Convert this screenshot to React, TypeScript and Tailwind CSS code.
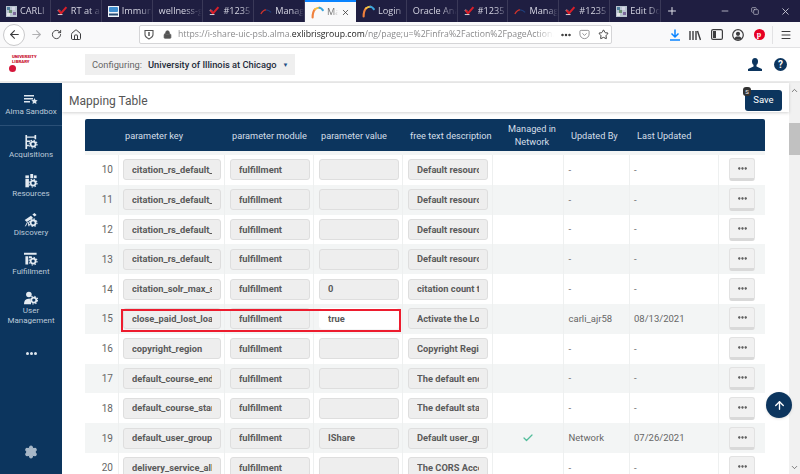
import React from "react";
import { ArrowLeft, ArrowRight, RotateCw, Home, MoreHorizontal, Star, Plus, Minus, X, Copy, ChevronUp, ChevronDown, ArrowUp, Check, Settings, Pocket, Menu, Lock } from "lucide-react";

const Rainbow = ({ s = 13 }: { s?: number }) => (
  <svg width={s} height={s} viewBox="0 0 16 16" fill="none" strokeWidth="2.6" strokeLinecap="round">
    <path d="M2 14C2 9 3 6 5 4" stroke="#f0803c" />
    <path d="M5 4C7 2.5 9 2 10.5 2.2" stroke="#f5c242" />
    <path d="M10.5 2.2C12 2.5 13.5 3.5 14.5 5" stroke="#3aa6dd" />
  </svg>
);
const Check2 = () => (
  <svg width="11" height="10" viewBox="0 0 14 12" fill="none">
    <path d="M1 5l3 1" stroke="#d9d9d9" strokeWidth="2" />
    <path d="M2 5l3 4 7-8" stroke="#d81f2a" strokeWidth="2.6" />
    <path d="M1 10.5h6" stroke="#ffffff" strokeWidth="1" />
  </svg>
);
const Mosaic = () => (
  <svg width="11" height="11" viewBox="0 0 11 11">
    <rect width="11" height="11" fill="#b9c4cf" />
    <rect x="1" y="1" width="3" height="3" fill="#4f7d9b" />
    <rect x="6" y="1" width="3" height="3" fill="#d7d7e8" />
    <rect x="3" y="4" width="3" height="3" fill="#6a8f6f" />
    <rect x="7" y="6" width="3" height="3" fill="#7c6a9c" />
    <rect x="1" y="7" width="3" height="3" fill="#e6e6e6" />
  </svg>
);
const Immune = () => (
  <svg width="11" height="11" viewBox="0 0 11 11">
    <rect width="11" height="11" fill="#eef4fa" />
    <rect x="1" y="1" width="9" height="5" rx="1" fill="#3f8fd0" />
    <rect x="1" y="7.5" width="9" height="2" fill="#284c74" />
  </svg>
);
const Arc = () => (
  <svg width="12" height="7" viewBox="0 0 14 8" fill="none" strokeWidth="1.5">
    <path d="M1 7C3 3 5 2 7 2" stroke="#d0342c" />
    <path d="M7 2C9 2 11 3 13 5" stroke="#1f3f7a" />
  </svg>
);

const tabs: { label: string; icon?: React.ReactNode; active?: boolean }[] = [
  { label: "CARLI", icon: <Mosaic /> },
  { label: "RT at a", icon: <Check2 /> },
  { label: "Immun", icon: <Immune /> },
  { label: "wellness-g" },
  { label: "#1235", icon: <Check2 /> },
  { label: "Manag", icon: <Arc /> },
  { label: "Ma", icon: <Rainbow />, active: true },
  { label: "Login", icon: <Rainbow /> },
  { label: "Oracle Ana" },
  { label: "#1235", icon: <Check2 /> },
  { label: "Manag", icon: <Arc /> },
  { label: "#1235", icon: <Check2 /> },
  { label: "Edit Do", icon: <Mosaic /> },
];

const Gear = ({ x, y }: { x: number; y: number }) => (
  <g>
    <circle cx={x} cy={y} r="3.6" fill="none" stroke="#e4ebf2" strokeWidth="2.6" />
    <circle cx={x} cy={y} r="5.6" fill="none" stroke="#e4ebf2" strokeWidth="1.6" strokeDasharray="2 2.4" />
  </g>
);

const SideIcon = ({ kind }: { kind: string }) => (
  <svg width="14" height="14" viewBox="0 0 20 20" fill="#e4ebf2">
    {kind === "acq" && (
      <>
        <path d="M2 0h2.4v20H2zM15 0h2.4v6H15zM4 2h11v1.8H4zM4 8h5v2H4zM4 14h3v2H4z" />
        <Gear x={13} y={13} />
      </>
    )}
    {kind === "res" && (
      <>
        <rect x="2" y="7" width="5" height="12" />
        <rect x="2" y="2" width="5" height="4" />
        <rect x="9" y="0" width="4" height="6" />
        <path d="M14 2h4v4h-4z" />
        <Gear x={13} y={13} />
      </>
    )}
    {kind === "dis" && (
      <>
        <path d="M1 10l9-6 3 3-9 6z" />
        <path d="M12 2l3-2 3 3-3 2z" />
        <path d="M5 13l-3 6M6 13l1 6" stroke="#e4ebf2" strokeWidth="1.4" />
        <Gear x={13} y={14} />
      </>
    )}
    {kind === "ful" && (
      <>
        <path d="M0 1h18v3H0zM2 6h4v12H2zM7 6h4v3H7z" />
        <Gear x={13} y={13} />
      </>
    )}
    {kind === "usr" && (
      <>
        <circle cx="7" cy="5" r="4" />
        <path d="M0 19c0-5 2-8 6-8s4 3 4 8z" />
        <Gear x={14} y={13} />
      </>
    )}
  </svg>
);

const navs = [
  { k: "acq", l: "Acquisitions" },
  { k: "res", l: "Resources" },
  { k: "dis", l: "Discovery" },
  { k: "ful", l: "Fulfillment" },
  { k: "usr", l: "User\nManagement" },
];

type Row = { n: number; key: string; val: string; desc: string; net?: boolean; by: string; at: string };
const rows: Row[] = [
  { n: 10, key: "citation_rs_default_a", val: "", desc: "Default resource", by: "-", at: "-" },
  { n: 11, key: "citation_rs_default_e", val: "", desc: "Default resource", by: "-", at: "-" },
  { n: 12, key: "citation_rs_default_i", val: "", desc: "Default resource", by: "-", at: "-" },
  { n: 13, key: "citation_rs_default_t", val: "", desc: "Default resource", by: "-", at: "-" },
  { n: 14, key: "citation_solr_max_s", val: "0", desc: "citation count to", by: "-", at: "-" },
  { n: 15, key: "close_paid_lost_loan", val: "true", desc: "Activate the Lost", by: "carli_ajr58", at: "08/13/2021" },
  { n: 16, key: "copyright_region", val: "", desc: "Copyright Region", by: "-", at: "-" },
  { n: 17, key: "default_course_end_", val: "", desc: "The default end", by: "-", at: "-" },
  { n: 18, key: "default_course_start", val: "", desc: "The default start", by: "-", at: "-" },
  { n: 19, key: "default_user_group_", val: "IShare", desc: "Default user_gro", net: true, by: "Network", at: "07/26/2021" },
  { n: 20, key: "delivery_service_allo", val: "", desc: "The CORS Acce", by: "-", at: "-" },
];

const gridCols = "grid grid-cols-[34px_106px_89px_89px_90px_71px_66px_89px_46px]";

const Field = ({ text, white }: { text: string; white?: boolean }) => (
  <div className={`h-[21px] w-full flex items-center px-2 rounded-[3px] border text-[9.3px] font-bold text-[#5a5a5a] ${white ? "bg-white border-white" : "bg-[#eeeeee] border-[#dedede]"}`}>
    <span className="block w-full overflow-hidden whitespace-nowrap">{text}</span>
  </div>
);

const Cell = ({ children, cls = "" }: { children?: React.ReactNode; cls?: string }) => (
  <div className={`h-full flex items-center border-r border-[#eef0f0] ${cls}`}>{children}</div>
);

export default function App() {
  return (
    <div className="relative w-[800px] h-[474px] overflow-hidden bg-white flex flex-col font-['Roboto',sans-serif]">
      {/* Tabs */}
      <div className="h-[22px] shrink-0 bg-[#1f1e41] flex items-stretch font-['Open_Sans',sans-serif] text-[9.2px] text-[#d5d5e2]">
        {tabs.map((t, i) => (
          <div
            key={i}
            className={`w-[50.85px] shrink-0 flex items-center gap-[3px] pl-[6px] overflow-hidden whitespace-nowrap ${t.active ? "bg-[#f9f9fa] text-[#777] border-t-2 border-t-[#0a84ff]" : "border-r border-[#3a3958]"}`}
          >
            {t.icon && <span className="shrink-0 flex">{t.icon}</span>}
            <span className="overflow-hidden flex-1 [mask-image:linear-gradient(to_right,#000_60%,transparent)]">{t.label}</span>
            {t.active && <X size={9} className="shrink-0 mr-[6px] text-[#333]" />}
          </div>
        ))}
        <div className="w-[22px] flex items-center justify-center text-[#e0e0e8]">
          <Plus size={12} />
        </div>
        <div className="flex-1 flex items-center justify-end text-[#c8c8d4]">
          <div className="w-[30px] flex justify-center"><Minus size={10} /></div>
          <div className="w-[30px] flex justify-center"><Copy size={8} /></div>
          <div className="w-[30px] flex justify-center"><X size={11} /></div>
        </div>
      </div>

      {/* Toolbar */}
      <div className="h-[26px] shrink-0 bg-[#f9f9fa] flex items-center border-b border-[#e2e2e4] text-[#3c3c3e]">
        <div className="ml-[3px] w-[22px] h-[22px] rounded-full border border-[#c9c9cb] bg-white flex items-center justify-center">
          <ArrowLeft size={13} />
        </div>
        <ArrowRight size={13} className="ml-[5px] text-[#b1b1b3]" />
        <RotateCw size={11} className="ml-[8px]" />
        <Home size={12} className="ml-[8px]" />
        <div className="ml-[57px] w-[473px] h-[19px] shrink-0 bg-white border border-[#d5d5d7] rounded-[2px] flex items-center pl-[4px] text-[8.7px] font-['Open_Sans',sans-serif] text-[#8a8a8c] whitespace-nowrap overflow-hidden">
          <svg width="10" height="11" viewBox="0 0 10 11" fill="none" stroke="#555" className="shrink-0">
            <path d="M1 1.5h8v4c0 2-2 3.500-4 4.500C3 9 1 7.500 1 5.500z" strokeWidth="1.100" />
            <path d="M5 3v4" strokeWidth="1.500" />
          </svg>
          <Lock size={9} fill="#555" className="shrink-0 ml-[9px] text-[#555]" />
          <span className="ml-[6px] w-[376px] shrink-0 overflow-hidden [mask-image:linear-gradient(to_right,#000_95%,transparent)]">
            https://i-share-uic-psb.alma.<span className="text-[#222]">exlibrisgroup.com</span>/ng/page;u=%2Finfra%2Faction%2FpageAction.do?xmlFile
          </span>
          <MoreHorizontal size={12} strokeWidth={3} className="shrink-0 ml-[6px] text-[#333]" />
          <Pocket size={11} className="shrink-0 ml-[6.5px]" />
          <Star size={11} className="shrink-0 ml-[8px] text-[#333]" />
        </div>
        <svg width="12" height="12" viewBox="0 0 12 12" fill="none" stroke="#0a84ff" strokeWidth="1.5" className="ml-[57px] shrink-0">
          <path d="M6 0.500v7.500M2.500 4.500L6 8l3.500-3.500M1 11h10" />
        </svg>
        <svg width="12" height="12" viewBox="0 0 12 12" fill="none" stroke="#3c3c3e" strokeWidth="1.400" className="ml-[8px] shrink-0">
          <path d="M1 2v9M4 2v9M7 2v9M8.500 2l3 9" />
        </svg>
        <svg width="12" height="11" viewBox="0 0 12 11" className="ml-[10px] shrink-0">
          <rect x="0.600" y="0.600" width="10.800" height="9.800" rx="1.500" fill="none" stroke="#3c3c3e" strokeWidth="1.200" />
          <rect x="2" y="2" width="3" height="7" fill="#3c3c3e" />
        </svg>
        <svg width="12" height="12" viewBox="0 0 12 12" className="ml-[9px] shrink-0">
          <circle cx="6" cy="6" r="5.300" fill="none" stroke="#3c3c3e" strokeWidth="1.200" />
          <circle cx="6" cy="4.800" r="2.100" fill="#3c3c3e" />
          <path d="M2.500 9.500C3 7.800 4.500 7.500 6 7.500s3 .3 3.500 2C8 11 4 11 2.500 9.500z" fill="#3c3c3e" />
        </svg>
        <div className="ml-[9.5px] w-[11px] h-[11px] rounded-full bg-[#e60023] text-white text-[8px] font-bold flex items-center justify-center font-['Liberation_Serif',serif]">p</div>
        <div className="ml-[7.5px] h-[18px] w-px bg-[#e2e2e4]" />
        <Menu size={12} className="ml-[7px]" />
      </div>

      {/* App header */}
      <div className="h-[35px] shrink-0 bg-white flex items-center border-b-2 border-[#ececec]">
        <div className="w-[85px] shrink-0 pl-[9px] pb-[2px]">
          <div className="text-[4.3px] leading-[4.5px] font-black text-[#c8102e] pl-[3px]">UNIVERSITY<br />LIBRARY</div>
          <div className="w-[7px] h-[7px] mt-[1px] rounded-full bg-[#d5163a]" />
        </div>
        <div className="w-[210px] h-[21px] bg-[#efefef] flex items-center pl-[7px] text-[9.3px]">
          <span className="text-[#666]">Configuring:</span>
          <span className="ml-[6px] font-medium text-[#1e2b3a]">University of Illinois at Chicago</span>
          <span className="ml-[6px] text-[6px] text-[#1f4f86]">▼</span>
        </div>
        <div className="flex-1" />
        <svg width="14" height="13" viewBox="0 0 14 13" fill="#0c355e" className="mr-[12px] shrink-0">
          <ellipse cx="7" cy="3.500" rx="3" ry="3.500" />
          <path d="M5.500 6h3v2.500L14 11v2H0v-2l5.500-2.500z" />
        </svg>
        <div className="w-[13px] h-[13px] rounded-full bg-[#0c355e] text-white text-[10px] font-bold flex items-center justify-center mr-[13px]">?</div>
      </div>

      {/* Body */}
      <div className="flex-1 min-h-0 flex">
        <aside className="w-[62px] shrink-0 bg-[#0c355e] text-[#bccad9] text-[8px] flex flex-col items-center">
          <div className="flex flex-col items-center pt-[12px] h-[43px] w-full border-b border-[#2a4f76]">
            <svg width="14" height="9" viewBox="0 0 14 9" fill="#dfe7ef">
              <path d="M0 0h10v1.500H0zM0 3h9v1.500H0zM0 6h6v1.500H0z" />
              <path d="M10.500 3l1 2 2.200.3-1.600 1.500.4 2.200-2-1-2 1 .4-2.200L7.300 5.300 9.500 5z" />
            </svg>
            <span className="mt-[3px] leading-[10px] whitespace-nowrap">Alma Sandbox</span>
          </div>
          <div className="flex flex-col items-center gap-[14px] pt-[9px]">
            {navs.map((n) => (
              <div key={n.k} className="flex flex-col items-center">
                <SideIcon kind={n.k} />
                <span className="mt-[1px] leading-[10px] text-center whitespace-pre-line">{n.l}</span>
              </div>
            ))}
          </div>
          <div className="mt-[26px] flex gap-[1px]">
            <span className="w-[3px] h-[3px] rounded-full bg-[#dfe7ef]" />
            <span className="w-[3px] h-[3px] rounded-full bg-[#dfe7ef]" />
            <span className="w-[3px] h-[3px] rounded-full bg-[#dfe7ef]" />
          </div>
          <div className="flex-1" />
          <Settings size={14} fill="#a8b8c8" className="mb-[15px] text-[#a8b8c8]" />
        </aside>

        <main className="flex-1 min-w-0 flex flex-col bg-white">
          <div className="h-[29px] w-[727px] shrink-0 flex items-center pl-[7px] pt-[6px] text-[12px] text-[#555] shadow-[0_1px_3px_rgba(0,0,0,0.18)] relative z-10 bg-white">
            Mapping Table
            <div className="absolute right-[7px] top-[7px] w-[37px] h-[21px] bg-[#0c355e] rounded-[3px] text-white text-[9.5px] flex items-center justify-center">Save</div>
            <div className="absolute right-[38px] top-[4px] w-[8px] h-[9px] rounded-[3px] bg-[#333] text-white text-[6px] flex items-center justify-center">S</div>
          </div>
          <div className="pl-[23px] pt-[7px]">
            <div className={`${gridCols} w-[680px] h-[36px] bg-[#0c355e] border-b-4 border-[#f3f5f5] text-[#d5dfe9] text-[9.2px] leading-[13px] items-center rounded-t-[2px]`}>
              <div />
              <div className="pl-[6px]">parameter key</div>
              <div className="pl-[7px] whitespace-nowrap">parameter module</div>
              <div className="pl-[7px] whitespace-nowrap">parameter value</div>
              <div className="pl-[7px] whitespace-nowrap">free text description</div>
              <div className="text-center pl-[7px]">Managed in<br />Network</div>
              <div className="pl-[7px]">Updated By</div>
              <div className="pl-[7px]">Last Updated</div>
              <div />
            </div>
            {rows.map((r) => (
              <div key={r.n} className={`${gridCols} w-[680px] h-[29.8px] items-center text-[9.5px] text-[#666] ${r.n % 2 ? "bg-[#f3f5f5]" : "bg-white"}`}>
                <Cell cls="justify-end pr-[5px] text-[10px]">{r.n}</Cell>
                <Cell cls="pl-[4px] pr-[3px]"><Field text={r.key} /></Cell>
                <Cell cls="pl-[5px] pr-[3px]"><Field text="fulfillment" /></Cell>
                <Cell cls="pl-[5px] pr-[3px]"><Field text={r.val} white={r.n === 15} /></Cell>
                <Cell cls="pl-[5px] pr-[4px]"><Field text={r.desc} /></Cell>
                <Cell cls="justify-center">{r.net && <Check size={12} strokeWidth={2.5} className="text-[#52bd9b]" />}</Cell>
                <Cell cls="pl-[4.5px]">{r.by}</Cell>
                <Cell cls="pl-[4px]">{r.at}</Cell>
                <div className="flex justify-center items-center h-full">
                  <div className="w-[26px] h-[23px] bg-[#f1f1f1] border border-[#e2e2e2] border-b-[3px] border-b-[#d9d9d9] rounded-[3px] flex items-center justify-center text-[#444]">
                    <MoreHorizontal size={11} strokeWidth={3} />
                  </div>
                </div>
              </div>
            ))}
          </div>
        </main>

        <div className="w-[11px] shrink-0 bg-[#f1f1f1] flex flex-col items-center text-[#555]">
          <ChevronUp size={9} className="mt-[3px]" />
          <div className="w-full h-[32px] bg-[#c1c1c1] mt-[28px]" />
          <div className="flex-1" />
          <ChevronDown size={9} className="mb-[2px]" />
        </div>
      </div>

      {/* Overlays */}
      <div className="absolute left-[121px] top-[309px] w-[280px] h-[23px] border-2 border-[#ed1c2e]" />
      <div className="absolute left-[766px] top-[392px] w-[26px] h-[26px] rounded-full bg-[#0c355e] flex items-center justify-center text-white shadow">
        <ArrowUp size={13} strokeWidth={2.5} />
      </div>
    </div>
  );
}
